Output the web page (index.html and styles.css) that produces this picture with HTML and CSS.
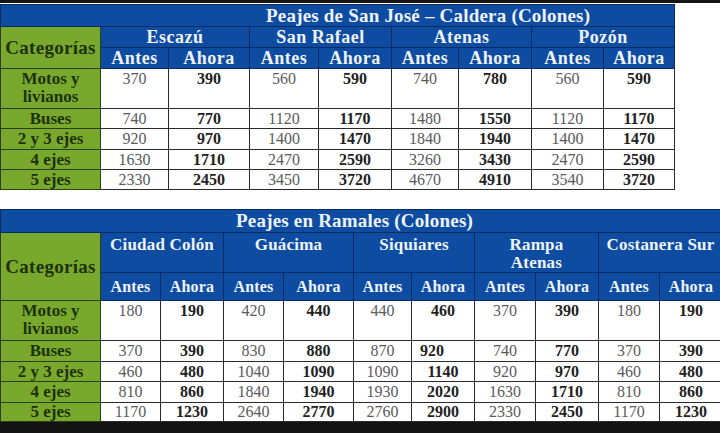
FILE: index.html
```html
<!DOCTYPE html>
<html lang="es">
<head>
<meta charset="utf-8">
<title>Peajes</title>
<link rel="stylesheet" href="styles.css">
</head>
<body>
<div class="page">
  <div class="topbar"></div>
  <table class="tbl t1">
    <colgroup>
      <col class="c-cat"><col style="width:68px"><col style="width:81px"><col style="width:69px"><col style="width:73px"><col style="width:67px"><col style="width:73px"><col style="width:72px"><col style="width:71px">
    </colgroup>
    <tr class="r-title"><th colspan="9" class="title title1">Peajes de San José – Caldera (Colones)</th></tr>
    <tr class="r-loc1">
      <th rowspan="2" class="cat-head">Categorías</th>
      <th colspan="2" class="loc">Escazú</th>
      <th colspan="2" class="loc">San Rafael</th>
      <th colspan="2" class="loc">Atenas</th>
      <th colspan="2" class="loc">Pozón</th>
    </tr>
    <tr class="r-sub1">
      <th class="sub">Antes</th><th class="sub">Ahora</th>
      <th class="sub">Antes</th><th class="sub">Ahora</th>
      <th class="sub">Antes</th><th class="sub">Ahora</th>
      <th class="sub">Antes</th><th class="sub">Ahora</th>
    </tr>
    <tr class="r-tall">
      <td class="cat">Motos y<br>livianos</td>
      <td class="old">370</td><td class="new">390</td><td class="old">560</td><td class="new">590</td><td class="old">740</td><td class="new">780</td><td class="old">560</td><td class="new">590</td>
    </tr>
    <tr class="r-a">
      <td class="cat">Buses</td>
      <td class="old">740</td><td class="new">770</td><td class="old">1120</td><td class="new">1170</td><td class="old">1480</td><td class="new">1550</td><td class="old">1120</td><td class="new">1170</td>
    </tr>
    <tr class="r-b">
      <td class="cat">2 y 3 ejes</td>
      <td class="old">920</td><td class="new">970</td><td class="old">1400</td><td class="new">1470</td><td class="old">1840</td><td class="new">1940</td><td class="old">1400</td><td class="new">1470</td>
    </tr>
    <tr class="r-a">
      <td class="cat">4 ejes</td>
      <td class="old">1630</td><td class="new">1710</td><td class="old">2470</td><td class="new">2590</td><td class="old">3260</td><td class="new">3430</td><td class="old">2470</td><td class="new">2590</td>
    </tr>
    <tr class="r-a">
      <td class="cat">5 ejes</td>
      <td class="old">2330</td><td class="new">2450</td><td class="old">3450</td><td class="new">3720</td><td class="old">4670</td><td class="new">4910</td><td class="old">3540</td><td class="new">3720</td>
    </tr>
  </table>

  <div class="gap"></div>

  <div class="clip">
  <table class="tbl t2">
    <colgroup>
      <col class="c-cat"><col style="width:60px"><col style="width:63px"><col style="width:60px"><col style="width:70px"><col style="width:58px"><col style="width:63px"><col style="width:61px"><col style="width:63px"><col style="width:61px"><col style="width:63px">
    </colgroup>
    <tr class="r-title2"><th colspan="11" class="title title2">Peajes en Ramales (Colones)</th></tr>
    <tr class="r-loc2">
      <th rowspan="2" class="cat-head">Categorías</th>
      <th colspan="2" class="loc loc2">Ciudad Colón</th>
      <th colspan="2" class="loc loc2">Guácima</th>
      <th colspan="2" class="loc loc2">Siquiares</th>
      <th colspan="2" class="loc loc2 wrap">Rampa<br>Atenas</th>
      <th colspan="2" class="loc loc2">Costanera Sur</th>
    </tr>
    <tr class="r-sub2">
      <th class="sub sub2">Antes</th><th class="sub sub2">Ahora</th>
      <th class="sub sub2">Antes</th><th class="sub sub2">Ahora</th>
      <th class="sub sub2">Antes</th><th class="sub sub2">Ahora</th>
      <th class="sub sub2">Antes</th><th class="sub sub2">Ahora</th>
      <th class="sub sub2">Antes</th><th class="sub sub2">Ahora</th>
    </tr>
    <tr class="r-tall">
      <td class="cat">Motos y<br>livianos</td>
      <td class="old">180</td><td class="new">190</td><td class="old">420</td><td class="new">440</td><td class="old">440</td><td class="new">460</td><td class="old">370</td><td class="new">390</td><td class="old">180</td><td class="new">190</td>
    </tr>
    <tr class="r-b">
      <td class="cat">Buses</td>
      <td class="old">370</td><td class="new">390</td><td class="old">830</td><td class="new">880</td><td class="old">870</td><td class="new la">920</td><td class="old">740</td><td class="new">770</td><td class="old">370</td><td class="new">390</td>
    </tr>
    <tr class="r-a">
      <td class="cat">2 y 3 ejes</td>
      <td class="old">460</td><td class="new">480</td><td class="old">1040</td><td class="new">1090</td><td class="old">1090</td><td class="new">1140</td><td class="old">920</td><td class="new">970</td><td class="old">460</td><td class="new">480</td>
    </tr>
    <tr class="r-b">
      <td class="cat">4 ejes</td>
      <td class="old">810</td><td class="new">860</td><td class="old">1840</td><td class="new">1940</td><td class="old">1930</td><td class="new">2020</td><td class="old">1630</td><td class="new">1710</td><td class="old">810</td><td class="new">860</td>
    </tr>
    <tr class="r-last">
      <td class="cat">5 ejes</td>
      <td class="old">1170</td><td class="new">1230</td><td class="old">2640</td><td class="new">2770</td><td class="old">2760</td><td class="new">2900</td><td class="old">2330</td><td class="new">2450</td><td class="old">1170</td><td class="new">1230</td>
    </tr>
  </table>
  </div>

  <div class="bottombar"></div>
</div>
</body>
</html>
```

FILE: styles.css
```css
* { box-sizing: border-box; }

html, body {
  margin: 0;
  padding: 0;
  background: #ffffff;
}

.page {
  width: 720px;
  height: 433px;
  overflow: hidden;
  display: flex;
  flex-direction: column;
  font-family: "Liberation Serif", Tinos, "Times New Roman", "DejaVu Serif", serif;
}

.tbl,
.tbl th,
.tbl td {
  font-family: "Liberation Serif", Tinos, "Times New Roman", "DejaVu Serif", serif;
}

.topbar {
  flex: none;
  height: 3px;
  background: #161616;
}

.gap {
  flex: none;
  height: 19px;
}

.clip {
  flex: none;
  width: 720px;
  overflow: hidden;
}

.bottombar {
  flex: 1;
  background: #131313;
}

.tbl {
  flex: none;
  border-collapse: collapse;
  table-layout: fixed;
}

.t1 {
  width: 674px;
  margin-top: 1px;
}

.t2 {
  width: 722px;
}

.c-cat { width: 100px; }

.tbl th,
.tbl td {
  padding: 0;
  text-align: center;
  white-space: nowrap;
  overflow: hidden;
}

/* header */
.title {
  background: #0e4ca2;
  color: #eef3fb;
  font-size: 19px;
  font-weight: bold;
  text-align: left !important;
  border: 1px solid #0a2c66;
  letter-spacing: 0.2px;
  line-height: 20px;
}
.title1 { padding-left: 265px !important; }
.title2 { padding-left: 235px !important; }

.loc,
.sub {
  background: #0e4ca2;
  color: #eef3fb;
  font-weight: bold;
  border: 1px solid #0a2c66;
  line-height: 19px;
}

.loc {
  font-size: 18px;
  letter-spacing: 0.5px;
}

.sub {
  font-size: 18px;
  letter-spacing: 0.5px;
}

.loc2 {
  font-size: 17px;
  letter-spacing: 0.2px;
  vertical-align: top;
  line-height: 18px;
  padding-top: 3px !important;
}

.sub2 {
  font-size: 16px;
  letter-spacing: 0.2px;
}

.cat-head {
  background: #79a92c;
  color: #1d310b;
  font-size: 19px;
  font-weight: bold;
  border: 1px solid #2c3f14;
  letter-spacing: 0.3px;
}

.cat {
  background: #79a92c;
  color: #1d310b;
  font-size: 17px;
  font-weight: bold;
  line-height: 18px;
  border: 1px solid #2c3f14;
}

.old,
.new {
  font-size: 16px;
  line-height: 18px;
  border: 1px solid #2a2a2a;
  background: #ffffff;
}

.old {
  color: #5a5a5a;
  font-weight: normal;
}

.new {
  color: #222222;
  font-weight: bold;
}

.la {
  text-align: left !important;
  padding-left: 8px !important;
}

.r-tall td {
  vertical-align: top;
  padding-top: 1px;
}

/* row heights */
.r-title  { height: 22px; }
.r-loc1   { height: 21px; }
.r-sub1   { height: 21px; }
.r-tall   { height: 40px; }
.r-a      { height: 20px; }
.r-b      { height: 21px; }

.r-title2 { height: 23px; }
.r-loc2   { height: 39px; }
.r-sub2   { height: 28px; }
.r-last   { height: 19px; }
```
